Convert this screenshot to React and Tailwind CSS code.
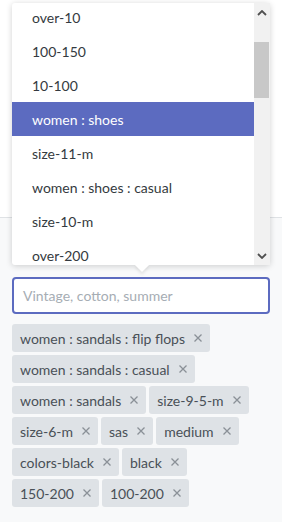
const options = [
  'over-10',
  '100-150',
  '10-100',
  'women : shoes',
  'size-11-m',
  'women : shoes : casual',
  'size-10-m',
  'over-200',
]

const tags = [
  'women : sandals : flip flops',
  'women : sandals : casual',
  'women : sandals',
  'size-9-5-m',
  'size-6-m',
  'sas',
  'medium',
  'colors-black',
  'black',
  '150-200',
  '100-200',
]

function Close() {
  return (
    <svg width="8" height="8" viewBox="0 0 8 8" className="ml-[9px] shrink-0">
      <path d="M0.5 0.5 L7.5 7.5 M7.5 0.5 L0.5 7.5" stroke="#8a9097" strokeWidth="1.3" />
    </svg>
  )
}

export default function App() {
  return (
    <div className="relative h-[522px] w-[282px] overflow-hidden bg-[#f8f9fa] text-[14px]" style={{ fontFamily: 'Lato, sans-serif' }}>
      <div className="h-[218px] border-b border-[#dfe2e5] bg-white" />

      <div className="px-[12px] pt-[59px]">
        <div className="flex h-[37px] items-center rounded-[4px] border-2 border-[#5c6bc0] bg-white px-[9px] text-[#a6adb4]">
          Vintage, cotton, summer
        </div>
        <div className="mt-[10px] flex flex-wrap gap-[3px]">
          {tags.map((tag) => (
            <span key={tag} className="flex h-[28px] items-center rounded-[3px] bg-[#dee2e6] pl-[8px] pr-[8px] text-[#495057]">
              {tag}
              <Close />
            </span>
          ))}
        </div>
      </div>

      <div className="absolute left-[12px] top-[3px] flex h-[262px] w-[258px] rounded-[3px] bg-white shadow-[0_1px_6px_rgba(0,0,0,0.18)]">
        <div className="h-full flex-1 overflow-hidden">
          <div className="-mt-[3px]">
            {options.map((item, i) => (
              <div
                key={item}
                className={
                  i === 3
                    ? 'flex h-[34px] items-center bg-[#5c6bc0] pl-[20px] text-white'
                    : 'flex h-[34px] items-center pl-[20px] text-[#343a40]'
                }
              >
                {item}
              </div>
            ))}
          </div>
        </div>
        <div className="relative h-full w-[16px] bg-[#f1f1f1]">
          <svg width="10" height="6" viewBox="0 0 10 6" className="absolute left-[3px] top-[7px]">
            <path d="M1 5 L5 1 L9 5" fill="none" stroke="#505050" strokeWidth="1.8" />
          </svg>
          <div className="absolute left-[0px] top-[39px] h-[56px] w-[15px] bg-[#c8c8c8]" />
          <svg width="10" height="6" viewBox="0 0 10 6" className="absolute bottom-[6px] left-[3px]">
            <path d="M1 1 L5 5 L9 1" fill="none" stroke="#505050" strokeWidth="1.8" />
          </svg>
        </div>
        <div className="absolute left-[125px] top-[257px] h-[10px] w-[10px] rotate-45 bg-white shadow-[2px_2px_3px_rgba(0,0,0,0.08)]" />
      </div>
    </div>
  )
}
